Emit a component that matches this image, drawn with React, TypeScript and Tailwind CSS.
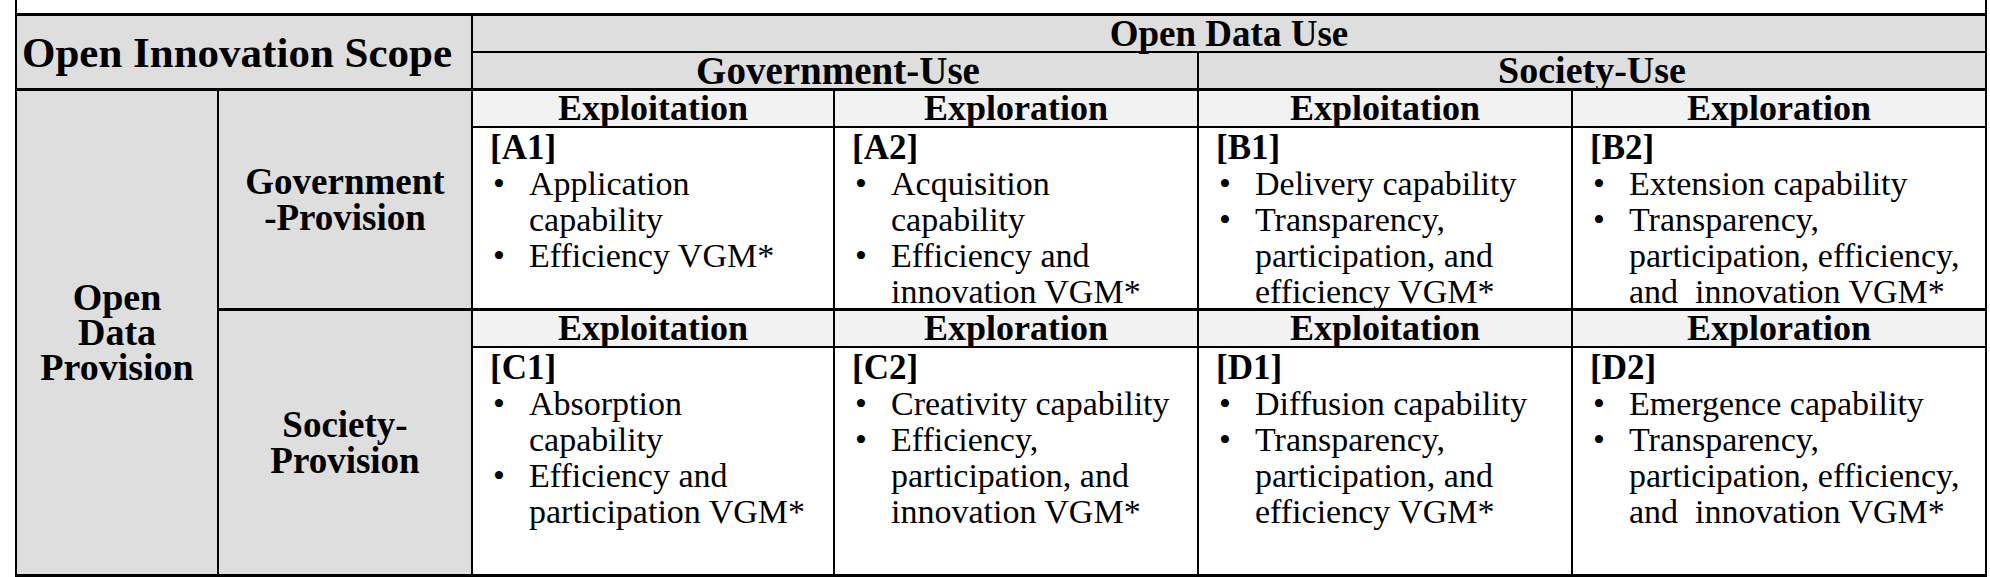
import React from "react";

type Cell = { id: string; items: string[][] };

const nb = String.fromCharCode(160);
const dot = String.fromCharCode(8226);

const top: Cell[] = [
  { id: "A1", items: [["Application", "capability"], ["Efficiency VGM*"]] },
  { id: "A2", items: [["Acquisition", "capability"], ["Efficiency and", "innovation VGM*"]] },
  { id: "B1", items: [["Delivery capability"], ["Transparency,", "participation, and", "efficiency VGM*"]] },
  { id: "B2", items: [["Extension capability"], ["Transparency,", "participation, efficiency,", "and" + nb + " innovation VGM*"]] },
];

const bottom: Cell[] = [
  { id: "C1", items: [["Absorption", "capability"], ["Efficiency and", "participation VGM*"]] },
  { id: "C2", items: [["Creativity capability"], ["Efficiency,", "participation, and", "innovation VGM*"]] },
  { id: "D1", items: [["Diffusion capability"], ["Transparency,", "participation, and", "efficiency VGM*"]] },
  { id: "D2", items: [["Emergence capability"], ["Transparency,", "participation, efficiency,", "and" + nb + " innovation VGM*"]] },
];

const bands = ["Exploitation", "Exploration", "Exploitation", "Exploration"];
const colClass = [
  "w-[362px] flex flex-col border-r-2 border-black",
  "w-[364px] flex flex-col border-r-2 border-black",
  "w-[374px] flex flex-col border-r-2 border-black",
  "flex-1 flex flex-col",
];

function Column(props: { band: string; cell: Cell; index: number }) {
  const { band, cell, index } = props;
  return (
    <div className={colClass[index]}>
      <div className="h-[37px] shrink-0 bg-[#f2f2f2] border-b-2 border-black flex items-center justify-center font-[Liberation_Serif] text-[36px] font-bold leading-[35px]">
        {band}
      </div>
      <div className="flex-1 bg-white pl-[17px] pt-[2px] font-[Liberation_Serif]">
        <div className="font-[Liberation_Serif] text-[35px] leading-[36px] font-bold">{"[" + cell.id + "]"}</div>
        {cell.items.map((lines, i) => (
          <div key={i} className="flex font-[Liberation_Serif] text-[34px] leading-[36px] whitespace-nowrap">
            <span className="w-[39px] shrink-0 pl-[3px]">{dot}</span>
            <div>
              {lines.map((l) => (
                <div key={l}>{l}</div>
              ))}
            </div>
          </div>
        ))}
      </div>
    </div>
  );
}

function Group(props: { title: string[]; cells: Cell[]; className: string }) {
  return (
    <div className={props.className}>
      <div className="w-[254px] shrink-0 bg-[#dedede] border-r-2 border-black flex flex-col items-center justify-center font-[Liberation_Serif] text-[37px] leading-[36px] font-bold">
        {props.title.map((t) => (
          <div key={t}>{t}</div>
        ))}
      </div>
      {props.cells.map((c, i) => (
        <Column key={c.id} band={bands[i]} cell={c} index={i} />
      ))}
    </div>
  );
}

export default function App() {
  return (
    <div className="w-[1990px] h-[577px] bg-white text-black font-serif">
      <div className="ml-[15px] w-[1972px] h-full border-x-2 border-black pt-[13px] flex flex-col">
        <div className="flex-1 flex flex-col border-t-[3px] border-b-[3px] border-black">
          <div className="flex h-[75px] shrink-0 border-b-[3px] border-black">
            <div className="w-[456px] bg-[#dedede] border-r-2 border-black flex items-center justify-center pr-[14px] font-[Liberation_Serif] text-[43px] font-bold leading-none">
              Open Innovation Scope
            </div>
            <div className="flex-1 flex flex-col bg-[#dedede]">
              <div className="h-[37px] border-b-2 border-black flex items-center justify-center font-[Liberation_Serif] text-[37px] font-bold leading-[35px]">
                Open Data Use
              </div>
              <div className="flex-1 flex">
                <div className="w-[726px] border-r-2 border-black flex items-center justify-center pl-[6px] font-[Liberation_Serif] text-[39px] font-bold leading-[35px]">
                  Government-Use
                </div>
                <div className="flex-1 flex items-center justify-center font-[Liberation_Serif] text-[38px] font-bold leading-[35px]">
                  Society-Use
                </div>
              </div>
            </div>
          </div>
          <div className="flex-1 flex min-h-0">
            <div className="w-[202px] shrink-0 bg-[#dedede] border-r-2 border-black flex flex-col items-center justify-center font-[Liberation_Serif] text-[38px] leading-[35px] font-bold">
              <div>Open</div>
              <div>Data</div>
              <div>Provision</div>
            </div>
            <div className="flex-1 flex flex-col">
              <Group title={["Government", "-Provision"]} cells={top} className="flex overflow-hidden h-[220px] shrink-0 border-b-[3px] border-black" />
              <Group title={["Society-", "Provision"]} cells={bottom} className="flex overflow-hidden flex-1" />
            </div>
          </div>
        </div>
      </div>
    </div>
  );
}
